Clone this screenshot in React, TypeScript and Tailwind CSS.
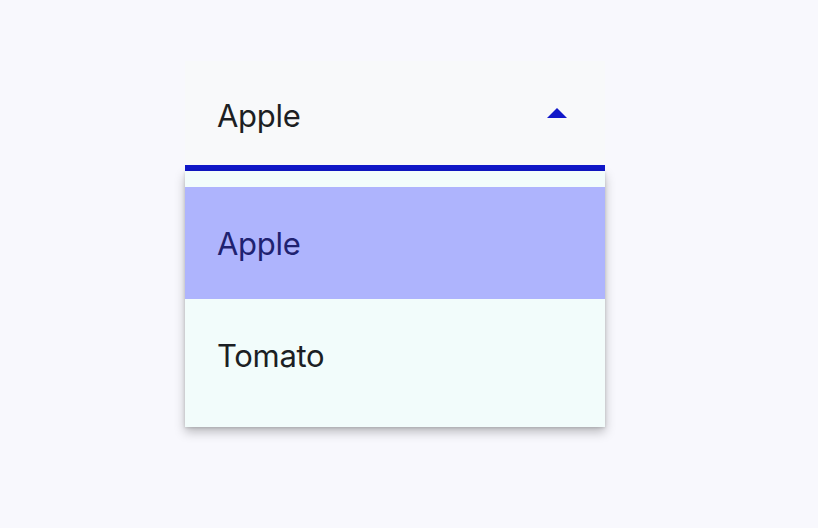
export default function App() {
  return (
    <div
      className="min-h-screen bg-[#f8f8fd] pl-[185px] pt-[61px]"
      style={{ fontFamily: 'Inter, "Noto Sans", sans-serif' }}
    >
      <div className="relative w-[420px]">
        {/* ── Select field ── */}
        <div className="flex h-[104px] items-center justify-between bg-[#f8f9fa] pl-8 pr-[38px] pt-1">
          <span className="text-[31px] leading-none tracking-[-0.3px] text-[#1d1f23]">Apple</span>
          <svg width="20" height="10" viewBox="0 0 20 10" className="-mt-1">
            <path d="M0 10 L10 0 L20 10 Z" fill="#1118c9" />
          </svg>
        </div>
        <div className="h-[6px] bg-[#1118c9]" />

        {/* ── Menu ── */}
        <div className="bg-[#f2fcfb] py-4 shadow-[0_5px_10px_rgba(0,0,0,0.25),0_1px_3px_rgba(0,0,0,0.15)]">
          <div className="flex h-[112px] items-center bg-[#aeb4fd] pl-8">
            <span className="text-[31px] leading-none tracking-[-0.3px] text-[#1f2270]">Apple</span>
          </div>
          <div className="flex h-[112px] items-center pl-8">
            <span className="text-[31px] leading-none tracking-[-0.3px] text-[#1c1f24]">Tomato</span>
          </div>
        </div>
      </div>
    </div>
  );
}
